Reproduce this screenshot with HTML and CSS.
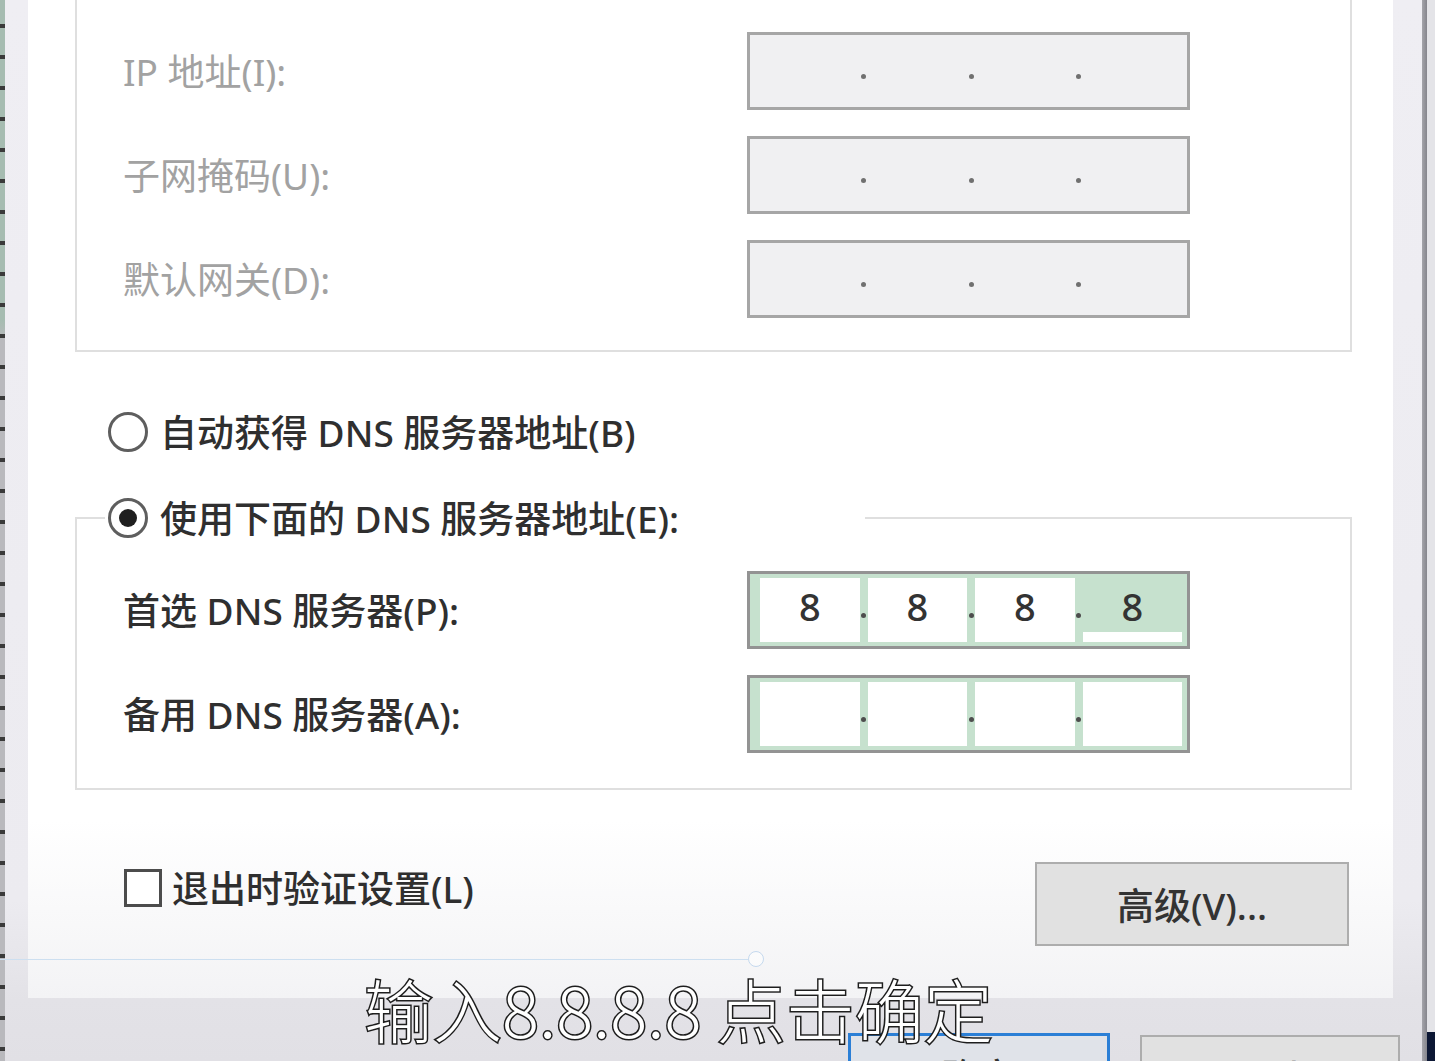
FILE: index.html
```html
<!DOCTYPE html>
<html lang="zh-CN">
<head>
    <meta charset="UTF-8">
    <meta name="viewport" content="width=device-width, initial-scale=1.0">
    <title>Internet 协议版本 4 (TCP/IPv4) 属性</title>
    <link rel="stylesheet" href="styles.css">
</head>
<body>
    <div class="screen">
        <div class="behind-left"></div>
        <div class="window">
            <div class="panel">
                <div class="group group-ip">
                    <div class="field-row">
                        <label class="field-label disabled">IP 地址(I):</label>
                        <div class="ip-box disabled">
                            <span class="seg"></span><span class="sep"></span>
                            <span class="seg"></span><span class="sep"></span>
                            <span class="seg"></span><span class="sep"></span>
                            <span class="seg"></span>
                        </div>
                    </div>
                    <div class="field-row">
                        <label class="field-label disabled">子网掩码(U):</label>
                        <div class="ip-box disabled">
                            <span class="seg"></span><span class="sep"></span>
                            <span class="seg"></span><span class="sep"></span>
                            <span class="seg"></span><span class="sep"></span>
                            <span class="seg"></span>
                        </div>
                    </div>
                    <div class="field-row">
                        <label class="field-label disabled">默认网关(D):</label>
                        <div class="ip-box disabled">
                            <span class="seg"></span><span class="sep"></span>
                            <span class="seg"></span><span class="sep"></span>
                            <span class="seg"></span><span class="sep"></span>
                            <span class="seg"></span>
                        </div>
                    </div>
                </div>

                <div class="radio-row radio-auto">
                    <span class="radio"></span>
                    <span class="option-text">自动获得 DNS 服务器地址(B)</span>
                </div>

                <fieldset class="group group-dns">
                    <legend>
                        <div class="radio-row">
                            <span class="radio checked"></span>
                            <span class="option-text">使用下面的 DNS 服务器地址(E):</span>
                        </div>
                    </legend>
                    <div class="field-row">
                        <label class="field-label">首选 DNS 服务器(P):</label>
                        <div class="ip-box">
                            <span class="seg">8</span><span class="sep"></span>
                            <span class="seg">8</span><span class="sep"></span>
                            <span class="seg">8</span><span class="sep"></span>
                            <span class="seg selected">8</span>
                        </div>
                    </div>
                    <div class="field-row">
                        <label class="field-label">备用 DNS 服务器(A):</label>
                        <div class="ip-box">
                            <span class="seg"></span><span class="sep"></span>
                            <span class="seg"></span><span class="sep"></span>
                            <span class="seg"></span><span class="sep"></span>
                            <span class="seg"></span>
                        </div>
                    </div>
                </fieldset>

                <div class="footer-row">
                    <label class="check-row">
                        <span class="checkbox"></span>
                        <span class="option-text">退出时验证设置(L)</span>
                    </label>
                    <button class="btn btn-advanced">高级(V)...</button>
                </div>
            </div>
            <div class="button-bar">
                <button class="btn btn-default">确定</button>
                <button class="btn btn-cancel">取消</button>
            </div>
        </div>
        <div class="window-edge"></div>
        <div class="behind-right"></div>

        <!-- video player overlay -->
        <div class="progress"><span class="progress-knob"></span></div>
        <div class="subtitle">输入8.8.8.8 点击确定</div>
    </div>
</body>
</html>
```

FILE: styles.css
```css
* {
    box-sizing: border-box;
}
html, body {
    margin: 0;
    height: 100%;
}
body {
    overflow: hidden;
    background: #e6e6ea;
    font-family: "Noto Sans", "Noto Sans CJK SC", sans-serif;
    color: #333;
}
.screen {
    position: relative;
    display: flex;
    width: 1435px;
    height: 1061px;
    overflow: hidden;
}
.behind-left {
    width: 5px;
    flex: none;
    background:
        repeating-linear-gradient(to bottom, transparent 0 24px, #3a3a3a 24px 28px, transparent 28px 31px),
        linear-gradient(to bottom, #a6bcb1 0, #a6bcb1 320px, #b9b9bd 340px, #b9b9bd 100%);
}
.window {
    flex: 1;
    display: flex;
    flex-direction: column;
    background: linear-gradient(to bottom, #efeef3 0, #ecebf0 900px, #e3e2e7 1000px, #e1e0e5 100%);
}
.window-edge {
    width: 5px;
    flex: none;
    background: linear-gradient(to right, #a5a5ab, #85858c);
}
.behind-right {
    width: 8px;
    flex: none;
    background: linear-gradient(to bottom, #e4e4e8 0, #e4e4e8 1032px, #0c1734 1032px);
}

/* dialog body */
.panel {
    margin: 0 29px 0 23px;
    padding: 0 41px 52px 47px;
    background: linear-gradient(to bottom, #fff 0, #fff 820px, #f3f3f5 998px);
}
.group {
    margin: 0;
    padding: 32px 0 32px 46px;
    border: 2px solid #dfdfdf;
    display: flex;
    flex-direction: column;
    gap: 26px;
}
.group-ip {
    border-top: none;
}
.group-dns {
    margin-top: 46px;
    padding-top: 33px;
    padding-bottom: 35px;
    min-width: 0;
}
.group-dns legend {
    margin-left: -18px;
    padding: 0 0 0 3px;
    width: 760px;
}
.field-row {
    display: grid;
    grid-template-columns: 624px 443px;
    align-items: center;
    height: 78px;
}
.field-label {
    font-size: 37px;
    line-height: 1;
    font-weight: 500;
    color: #2f2f2f;
}
.field-label.disabled {
    font-weight: 400;
    color: #a2a2a2;
}

/* segmented address box */
.ip-box {
    display: grid;
    grid-template-columns: 1fr 8px 1fr 8px 1fr 8px 1fr;
    height: 78px;
    padding: 4px 5px 4px 10px;
    border: 3px solid #939393;
    background: #c6e1ce;
}
.seg {
    display: flex;
    align-items: center;
    justify-content: center;
    background: #fff;
    font-size: 38px;
    font-weight: 500;
    line-height: 1;
    padding-bottom: 8px;
    color: #333;
}
.seg.selected {
    background: linear-gradient(to bottom, #c6e1ce 0, #c6e1ce 54px, #fff 54px, #fff 64px);
}
.sep {
    display: flex;
    align-items: center;
    justify-content: center;
    padding-top: 10px;
}
.sep::after {
    content: "";
    width: 5px;
    height: 5px;
    border-radius: 50%;
    background: #4d4d4d;
}
.ip-box.disabled {
    background: #f0f0f2;
    border-color: #a6a6a6;
}
.ip-box.disabled .seg {
    background: transparent;
}
.ip-box.disabled .sep::after {
    background: #707070;
}

/* radios and checkbox */
.radio-row {
    display: flex;
    align-items: center;
    gap: 12px;
    height: 40px;
}
.radio-auto {
    margin: 60px 0 0 33px;
}
.radio {
    flex: none;
    width: 40px;
    height: 40px;
    border: 3px solid #5e5e5e;
    border-radius: 50%;
    background: #fff;
    display: flex;
    align-items: center;
    justify-content: center;
}
.radio.checked::after {
    content: "";
    width: 18px;
    height: 18px;
    border-radius: 50%;
    background: #1f1f1f;
}
.option-text {
    font-size: 37px;
    line-height: 1;
    font-weight: 500;
    color: #2f2f2f;
    white-space: nowrap;
}
.footer-row {
    display: flex;
    justify-content: space-between;
    align-items: flex-start;
    margin-top: 72px;
    padding: 0 3px 0 49px;
}
.check-row {
    display: flex;
    align-items: center;
    gap: 10px;
    margin-top: 7px;
}
.checkbox {
    width: 38px;
    height: 38px;
    border: 3px solid #4c4c4c;
    background: #fff;
}

/* buttons */
.btn {
    height: 84px;
    border: 2px solid #adadad;
    background: #e1e1e1;
    font-family: "Noto Sans", "Noto Sans CJK SC", sans-serif;
    font-size: 37px;
    font-weight: 500;
    color: #333;
    padding: 0;
}
.btn-advanced {
    width: 314px;
}
.button-bar {
    display: flex;
    justify-content: flex-end;
    gap: 30px;
    padding: 35px 22px 0 0;
}
.btn-default {
    width: 262px;
    border: 3px solid #2b7fd6;
    background: #e0e3e9;
}
.btn-cancel {
    width: 260px;
    margin-top: 2px;
}

/* video overlay */
.progress {
    position: absolute;
    left: 0;
    top: 959px;
    width: 748px;
    height: 1px;
    background: #cddff0;
}
.progress-knob {
    position: absolute;
    left: 748px;
    top: -8px;
    width: 16px;
    height: 16px;
    border: 1px solid #c5d9ee;
    border-radius: 50%;
    background: rgba(255, 255, 255, 0.5);
}
.subtitle {
    position: absolute;
    left: 364px;
    top: 974px;
    font-family: "Noto Sans CJK SC", sans-serif;
    font-weight: 300;
    font-size: 69px;
    line-height: 1;
    white-space: nowrap;
    color: #fff;
    -webkit-text-stroke: 3px #1e1e1e;
    paint-order: stroke fill;
}
```
